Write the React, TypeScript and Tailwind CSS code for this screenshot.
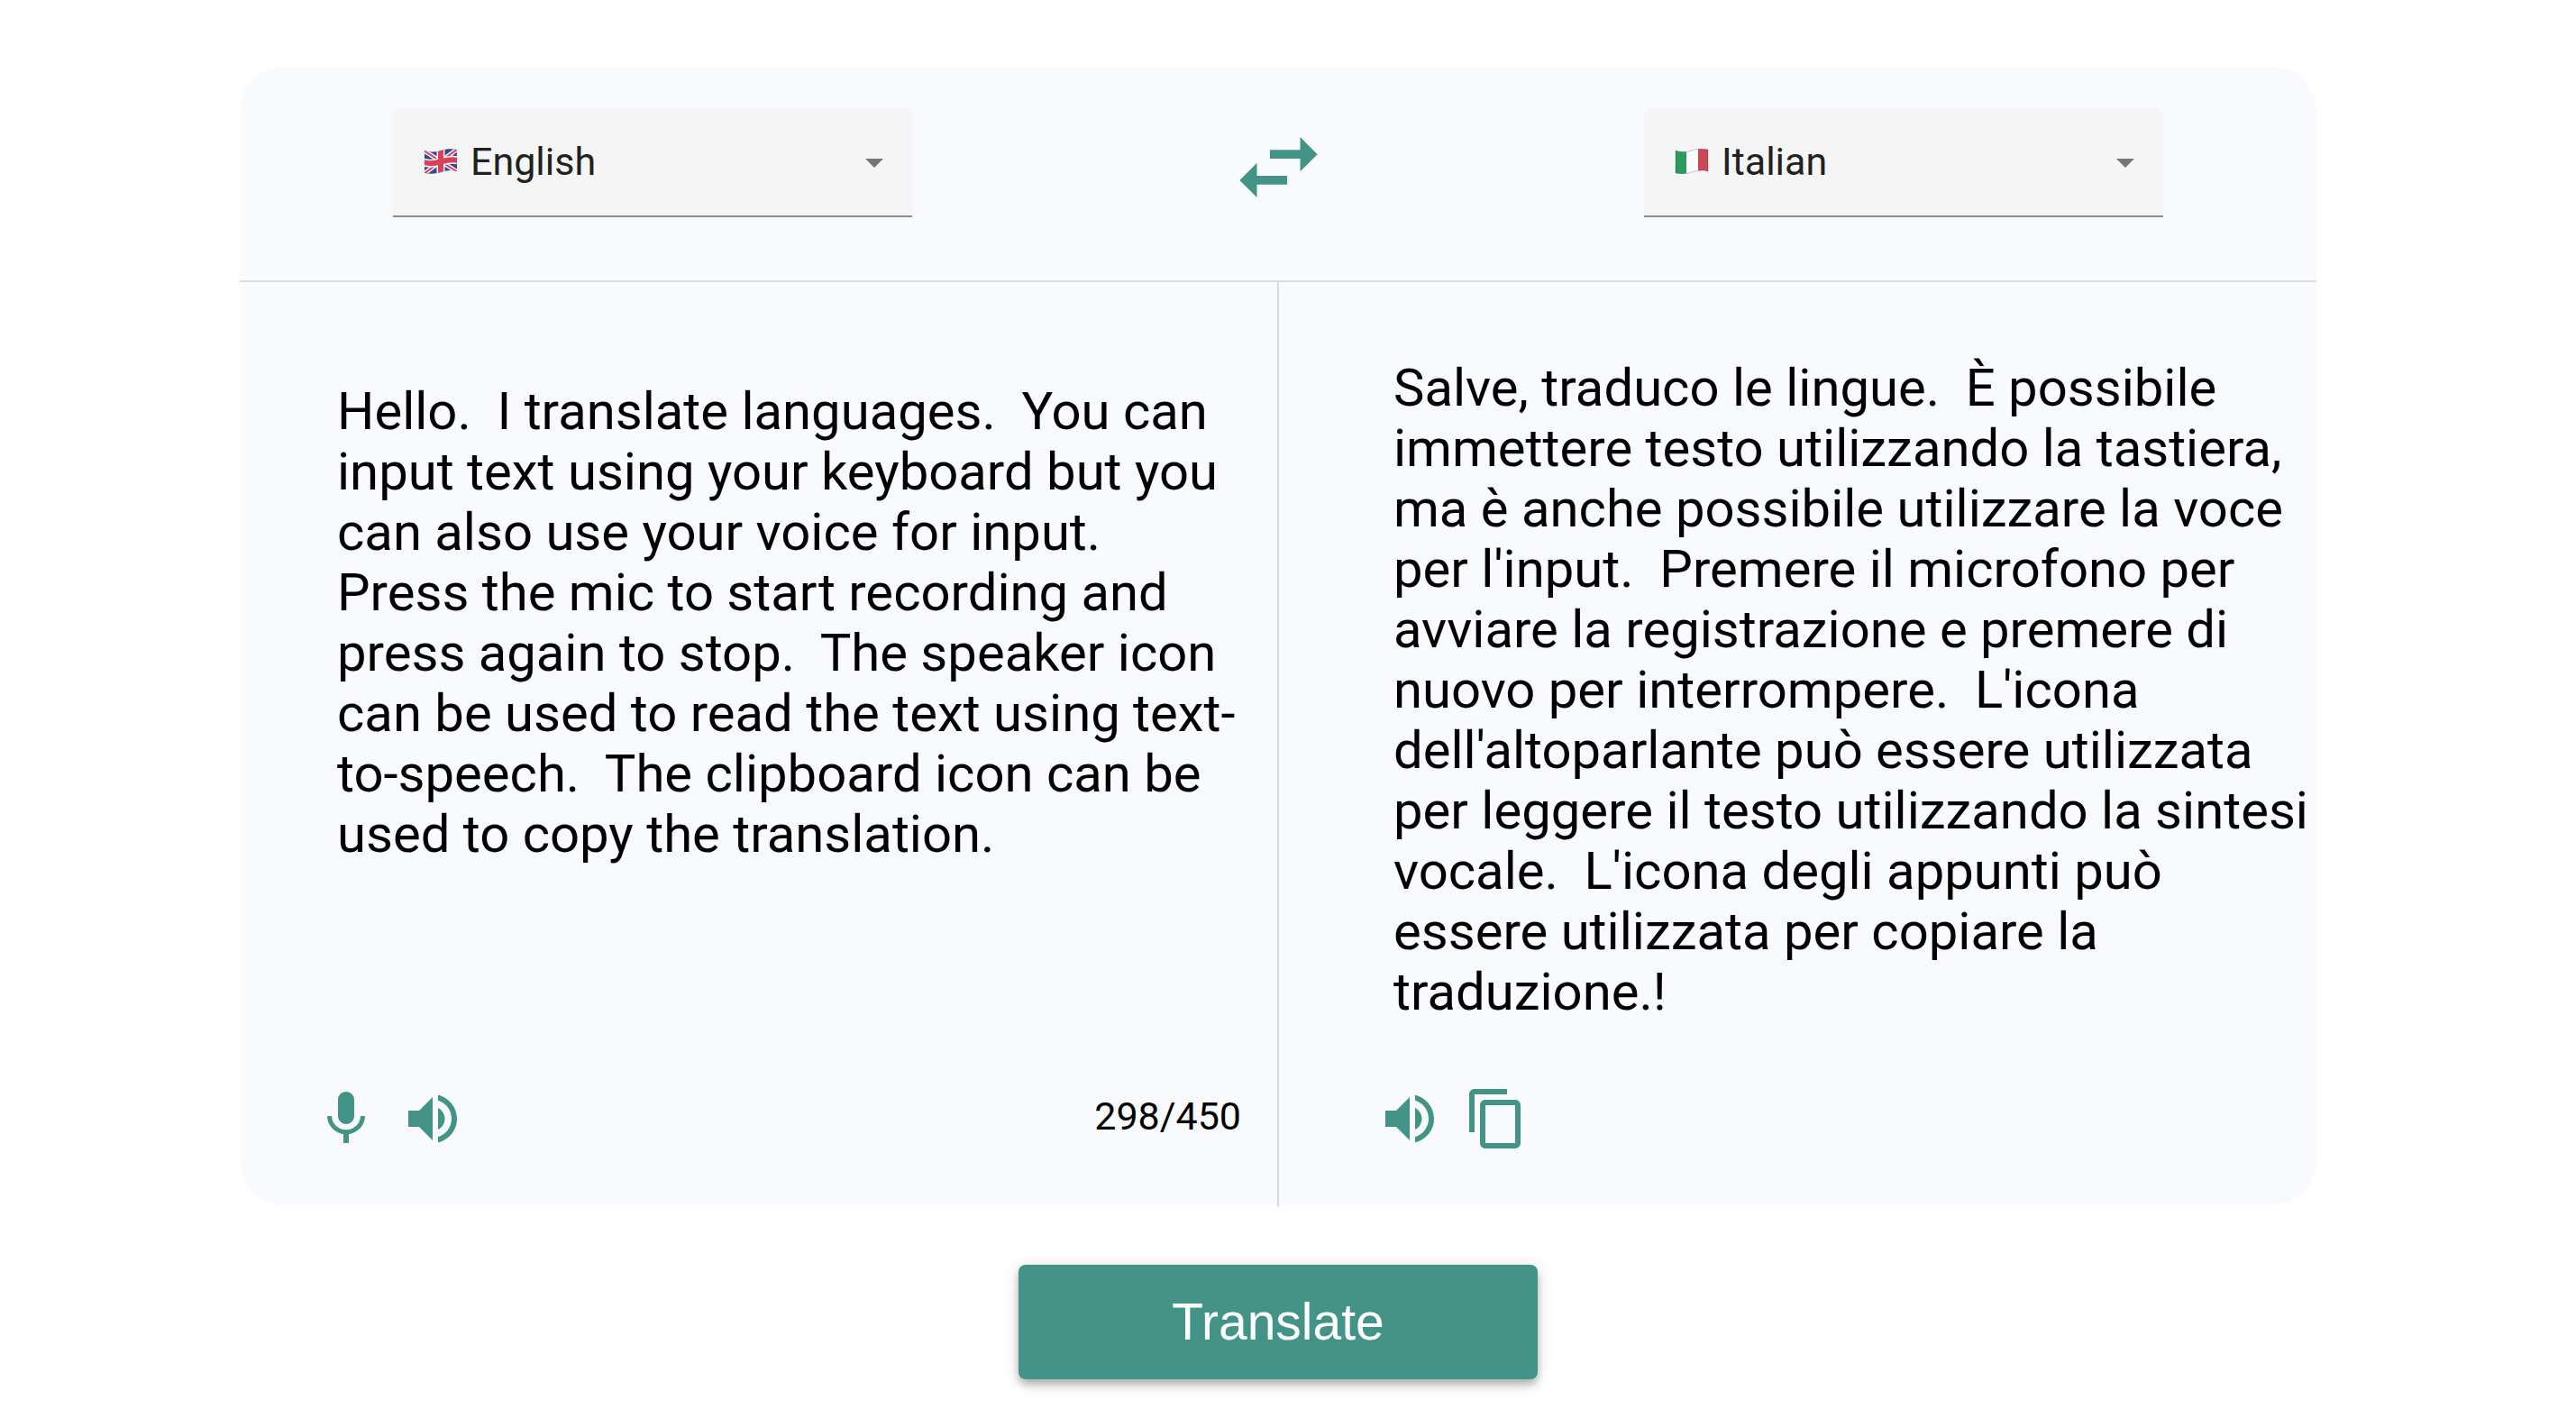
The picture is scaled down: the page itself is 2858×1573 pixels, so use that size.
import { useState } from "react";
import type { ReactNode } from "react";
import { MdSwapHoriz } from "react-icons/md";

const SOURCE_TEXT =
  "Hello.  I translate languages.  You can input text using your keyboard but you can also use your voice for input.  Press the mic to start recording and press again to stop.  The speaker icon can be used to read the text using text-to-speech.  The clipboard icon can be used to copy the translation.";

const TRANSLATED_TEXT =
  "Salve, traduco le lingue.  È possibile immettere testo utilizzando la tastiera, ma è anche possibile utilizzare la voce per l'input.  Premere il microfono per avviare la registrazione e premere di nuovo per interrompere.  L'icona dell'altoparlante può essere utilizzata per leggere il testo utilizzando la sintesi vocale.  L'icona degli appunti può essere utilizzata per copiare la traduzione.!";

const FLAG_OUTLINE = "M1 2C7 4 13 4 19 2S31 0 37 1V25C31 23 25 24 19 26S7 28 1 27Z";

function UkFlag() {
  return (
    <svg viewBox="0 0 38 28" className="h-7 w-[38px]" aria-hidden="true">
      <clipPath id="uk-outline">
        <path d={FLAG_OUTLINE} />
      </clipPath>
      <g clipPath="url(#uk-outline)">
        <path fill="#34468c" d="M0 0H38V28H0Z" />
        <path stroke="#f2f2f4" strokeWidth="5" d="M0 2L38 26M0 28L38 0" />
        <path stroke="#d8415a" strokeWidth="2" d="M0 2L38 26M0 28L38 0" />
        <path fill="none" stroke="#f2f2f4" strokeWidth="9" d="M19 0V28M0 15C10 18 16 15 20 14S32 11 38 13" />
        <path fill="none" stroke="#d8415a" strokeWidth="6" d="M19 0V28M0 15C10 18 16 15 20 14S32 11 38 13" />
      </g>
    </svg>
  );
}

function ItalyFlag() {
  return (
    <svg viewBox="0 0 38 28" className="h-7 w-[38px]" aria-hidden="true">
      <clipPath id="it-outline">
        <path d={FLAG_OUTLINE} />
      </clipPath>
      <g clipPath="url(#it-outline)">
        <path fill="#2b9a5e" d="M0 0H13V28H0Z" />
        <path fill="#fbfbfb" d="M13 0H26V28H13Z" />
        <path fill="#cb4854" d="M26 0H38V28H26Z" />
      </g>
      <path fill="none" stroke="#00000033" strokeWidth="1" d={FLAG_OUTLINE} />
    </svg>
  );
}

function Icon({ d }: { d: string }) {
  return (
    <svg viewBox="0 0 24 24" className="size-[72px]" fill="currentColor" aria-hidden="true">
      <path d={d} />
    </svg>
  );
}

const MIC =
  "M12 14c1.66 0 2.99-1.34 2.99-3L15 5c0-1.66-1.34-3-3-3S9 3.34 9 5v6c0 1.66 1.34 3 3 3zm5.3-3c0 3-2.54 5.1-5.3 5.1S6.7 14 6.7 11H5c0 3.41 2.72 6.23 6 6.72V21h2v-3.28c3.28-.48 6-3.3 6-6.72h-1.7z";
const VOLUME =
  "M3 9v6h4l5 5V4L7 9H3zm13.5 3c0-1.77-1.02-3.29-2.5-4.03v8.05c1.48-.73 2.5-2.25 2.5-4.02zM14 3.23v2.06c2.89.86 5 3.54 5 6.71s-2.11 5.85-5 6.71v2.06c4.01-.91 7-4.49 7-8.77s-2.99-7.86-7-8.77z";
const COPY =
  "M16 1H4c-1.1 0-2 .9-2 2v14h2V3h12V1zm3 4H8c-1.1 0-2 .9-2 2v14c0 1.1.9 2 2 2h11c1.1 0 2-.9 2-2V7c0-1.1-.9-2-2-2zm0 16H8V7h11v14z";

function IconButton({ label, d }: { label: string; d: string }) {
  return (
    <button type="button" aria-label={label} className="cursor-pointer text-[#439486]">
      <Icon d={d} />
    </button>
  );
}

interface LanguageSelectProps {
  label: string;
  value: string;
  onChange: (value: string) => void;
}

const FLAGS: Record<string, ReactNode> = { English: <UkFlag />, Italian: <ItalyFlag /> };

function LanguageSelect({ label, value, onChange }: LanguageSelectProps) {
  return (
    <div className="relative w-full max-w-[576px]">
      <select
        aria-label={label}
        value={value}
        onChange={(e) => onChange(e.target.value)}
        className="h-[121px] w-full cursor-pointer appearance-none rounded-t-lg border-b-2 border-[#8c8c8c] bg-[#f5f5f5] pr-16 pl-[86px] text-[43px] text-[#212121] outline-none"
      >
        <option>English</option>
        <option>Italian</option>
      </select>
      <span className="pointer-events-none absolute inset-y-0 left-[34px] flex items-center pb-1">{FLAGS[value]}</span>
      <span className="pointer-events-none absolute inset-y-0 right-8 flex items-center">
        <svg viewBox="0 0 20 10" className="h-2.5 w-5" fill="#757575" aria-hidden="true">
          <path d="M0 0h20L10 10z" />
        </svg>
      </span>
    </div>
  );
}

export default function App() {
  const [source, setSource] = useState("English");
  const [target, setTarget] = useState("Italian");
  const [text, setText] = useState(SOURCE_TEXT);

  const swap = () => {
    setSource(target);
    setTarget(source);
  };

  return (
    <main className="min-h-screen bg-white pt-[74px] pr-[22px] font-['Roboto',sans-serif] text-black">
      <div className="mx-auto w-full max-w-[2304px]">
        <div className="rounded-[48px] bg-[#f9fafe]">
          <header className="flex items-start justify-between border-b-2 border-[#dcdcdf] px-[170px] pt-[46px] pb-[68px]">
            <LanguageSelect label="Source language" value={source} onChange={setSource} />
            <button type="button" aria-label="Swap languages" onClick={swap} className="mt-2 shrink-0 cursor-pointer text-[#439486]">
              <MdSwapHoriz className="size-[115px]" />
            </button>
            <LanguageSelect label="Target language" value={target} onChange={setTarget} />
          </header>

          <div className="flex">
            <section className="flex min-w-0 flex-1 flex-col pt-[110px] pb-[59px]">
              <textarea
                aria-label="Text to translate"
                rows={8}
                maxLength={450}
                spellCheck={false}
                value={text}
                onChange={(e) => setText(e.target.value)}
                className="mr-[40px] ml-[108px] resize-none overflow-hidden text-[58px] leading-[67px] outline-none"
              />
              <div className="mt-auto flex items-center gap-6 pr-[40px] pl-[82px]">
                <IconButton label="Record voice" d={MIC} />
                <IconButton label="Read source text" d={VOLUME} />
                <span className="ml-auto pb-1.5 text-[43px]">{text.length}/450</span>
              </div>
            </section>

            <div className="-mb-[3px] w-0.5 bg-[#dcdcdf]" />

            <section className="flex min-w-0 flex-1 flex-col pt-[84px] pb-[59px]">
              <p className="ml-[127px] text-[58px] leading-[67px] whitespace-pre-wrap">{TRANSLATED_TEXT}</p>
              <div className="mt-[71px] flex items-center gap-6 pl-[109px]">
                <IconButton label="Read translation" d={VOLUME} />
                <IconButton label="Copy translation" d={COPY} />
              </div>
            </section>
          </div>
        </div>

        <button
          type="button"
          className="mx-auto mt-[67px] mb-[42px] block h-[127px] w-1/4 cursor-pointer rounded-lg bg-[#439486] font-['Liberation_Sans',Arial,sans-serif] text-[57px] text-white shadow-[0_4px_8px_-2px_rgba(0,0,0,0.2),0_8px_10px_0_rgba(0,0,0,0.14),0_2px_20px_0_rgba(0,0,0,0.12)]"
        >
          Translate
        </button>
      </div>
    </main>
  );
}
